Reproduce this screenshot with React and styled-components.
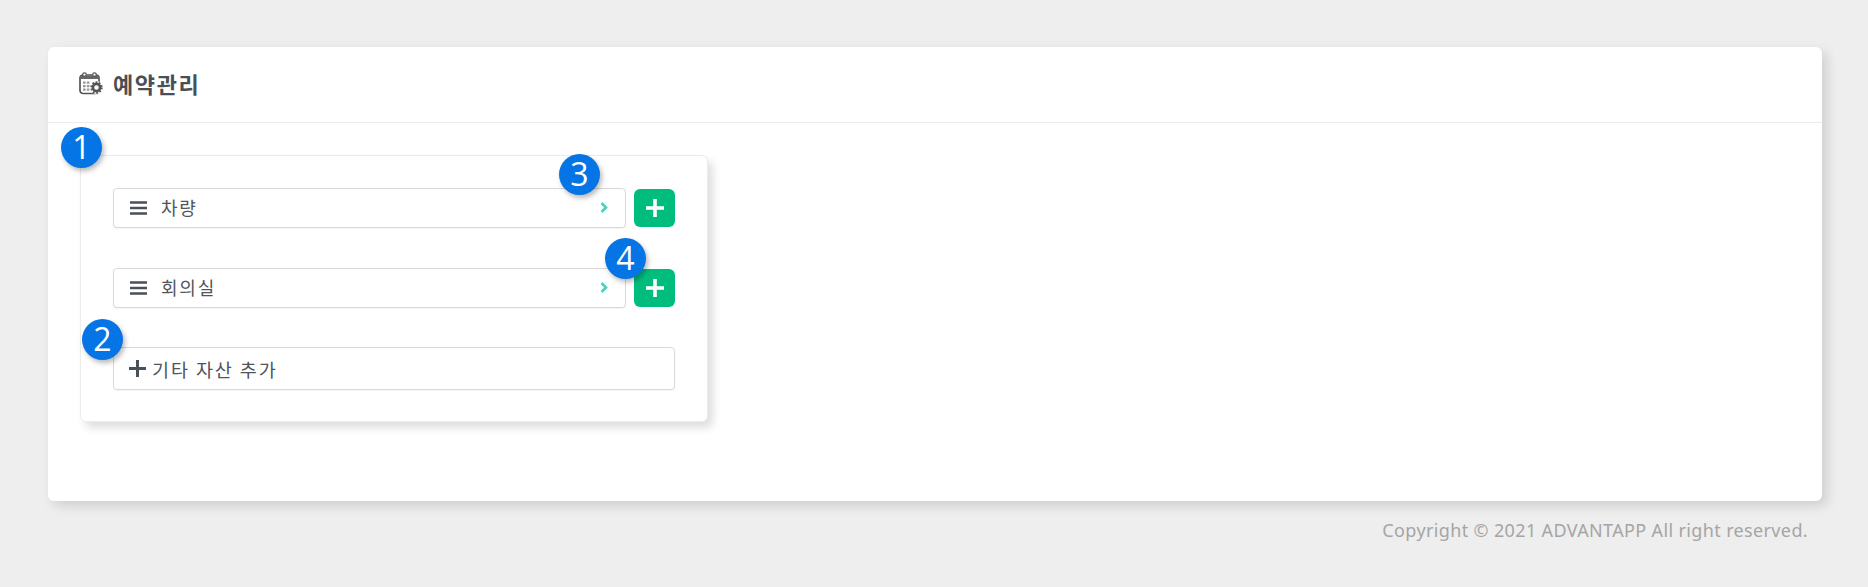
import React from "react";
import styled, { createGlobalStyle } from "styled-components";

const Global = createGlobalStyle`
  html, body { margin: 0; padding: 0; background: #eeeeee; }
  body { font-family: "Noto Sans CJK KR", "Noto Sans", sans-serif; color: #495057; }
  * { box-sizing: border-box; }
`;
const Page = styled.div`
  width: 1868px; height: 587px; padding: 47px 46px 0 48px; overflow: hidden;
`;
const Card = styled.section`
  height: 454px; background: #fff; border-radius: 6px;
  box-shadow: 5px 5px 12px rgba(0,0,0,.13);
`;
const Header = styled.header`
  height: 76px; border-bottom: 1px solid #e9ecef; padding: 0 0 3px 31px;
  display: flex; align-items: center; gap: 10px;
`;
const Title = styled.h1`
  margin: 0; font-size: 22px; line-height: 26px; font-weight: 700; color: #4a4f55;
  letter-spacing: 1.6px;
`;
const Body = styled.div`padding: 32px 0 0 32px;`;
const Panel = styled.div`
  position: relative; width: 628px; height: 267px; background: #fff;
  border: 1px solid #ececec; border-radius: 6px; padding: 32px 31px 0 32px;
  box-shadow: 5px 6px 9px rgba(0,0,0,.13);
`;
const Row = styled.div`
  display: flex; align-items: center; gap: 8px; width: 562px; height: 40px; margin-bottom: 40px;
`;
const Field = styled.div`
  flex: 1; height: 40px; border: 1px solid #d9d9d9; border-radius: 4px;
  box-shadow: 0 1px 1px rgba(0,0,0,.05);
  display: flex; align-items: center; padding: 0 17px 0 16px;
  font-size: 18px; letter-spacing: 1.8px; color: #50555b; background: #fff;
`;
const Label = styled.span`flex: 1; margin-left: 14px; margin-top: -2px;`;
const ChevronIcon = styled.svg`margin-top: -2px;`;
const AddButton = styled.button`
  width: 41px; height: 38px; border: 0; padding: 0; border-radius: 6px; background: #00bd7e;
  display: flex; align-items: center; justify-content: center;
`;
const AddField = styled.div`
  height: 43px; width: 562px; border: 1px solid #d9d9d9; border-radius: 4px;
  box-shadow: 0 1px 1px rgba(0,0,0,.05); margin-top: -1px;
  display: flex; align-items: center; gap: 6px; padding: 0 0 0 15px;
  font-size: 18.5px; letter-spacing: 1.9px; color: #50555b;
`;
const Badge = styled.div`
  position: absolute; left: ${p => p.$x}px; top: ${p => p.$y}px;
  width: 41px; height: 41px; border-radius: 50%; background: #0575e6;
  color: #fff; font: 500 32px/40px "Open Sans", sans-serif; text-align: center;
  box-shadow: 2px 3px 5px rgba(0,0,0,.28);
`;
const Copyright = styled.footer`
  text-align: right; padding: 16px 14px 0 0;
  font-size: 18px; line-height: 26px; letter-spacing: .36px; color: #a5a5a5; font-family: "Noto Sans", sans-serif;
`;

const Menu = () => (
  <svg width="17" height="14" viewBox="0 0 17 14"><path d="M0 1.5h17M0 7h17M0 12.5h17" stroke="#495057" strokeWidth="2.4" /></svg>
);
const Chevron = () => (
  <ChevronIcon width="8" height="11" viewBox="0 0 8 11" fill="none"><path d="M1.5 1 6 5.5 1.5 10" stroke="#4fd1b8" strokeWidth="2.6" /></ChevronIcon>
);
const Plus = ({ size = 18, color = "#fff", w = 3.6 }) => (
  <svg width={size} height={size} viewBox="0 0 18 18"><path d="M9 0v18M0 9h18" stroke={color} strokeWidth={w} /></svg>
);
const CalendarGear = () => (
  <svg width="24" height="23" viewBox="0 0 24 23" fill="none">
    <rect x="1" y="3" width="19" height="18.5" rx="3" stroke="#555" strokeWidth="1.7" />
    <rect x="1" y="3.5" width="19" height="3.5" fill="#666" />
    <circle cx="5.5" cy="2.6" r="1.8" fill="#fff" stroke="#555" strokeWidth="1.2" />
    <circle cx="15.5" cy="2.6" r="1.8" fill="#fff" stroke="#555" strokeWidth="1.2" />
    <path d="M4 9.5h2.6v2.2H4zM7.8 9.5h2.6v2.2H7.8zM4 13h2.6v2.2H4zM7.8 13h2.6v2.2H7.8zM4 16.5h2.6v2.2H4zM7.8 16.5h2.6v2.2H7.8z" fill="#999" />
    <circle cx="17.5" cy="15.5" r="6.5" fill="#fff" />
    <circle cx="17.5" cy="15.5" r="3.6" stroke="#555" strokeWidth="2.6" />
    <circle cx="17.5" cy="15.5" r="5.4" stroke="#555" strokeWidth="1.6" strokeDasharray="1.8 1.6" />
  </svg>
);

const assets = ["차량", "회의실"];

export default function App() {
  return (
    <Page>
      <Global />
      <Card>
        <Header>
          <CalendarGear />
          <Title>예약관리</Title>
        </Header>
        <Body>
          <Panel>
            {assets.map(name => (
              <Row key={name}>
                <Field>
                  <Menu />
                  <Label>{name}</Label>
                  <Chevron />
                </Field>
                <AddButton aria-label="추가"><Plus /></AddButton>
              </Row>
            ))}
            <AddField>
              <Plus size={17} color="#495057" w={3.2} />
              기타 자산 추가
            </AddField>
            <Badge $x={-20} $y={-29}>1</Badge>
            <Badge $x={1} $y={163}>2</Badge>
            <Badge $x={478} $y={-2}>3</Badge>
            <Badge $x={524} $y={82}>4</Badge>
          </Panel>
        </Body>
      </Card>
      <Copyright>Copyright © 2021 ADVANTAPP All right reserved.</Copyright>
    </Page>
  );
}
